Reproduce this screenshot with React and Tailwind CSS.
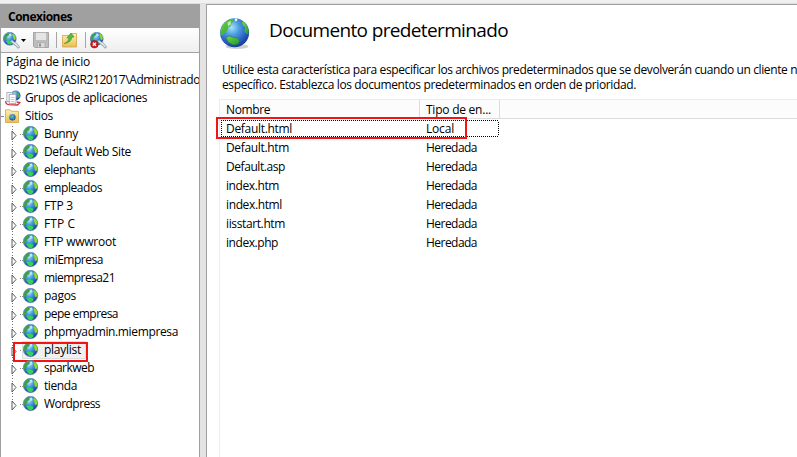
import { useLayoutEffect, useRef, useState } from "react";

// Text tracked so that it fills exactly `w` pixels.
function Fit({ w, children }) {
  const ref = useRef(null);
  const [spacing, setSpacing] = useState(0);
  useLayoutEffect(() => {
    const natural = ref.current.getBoundingClientRect().width;
    setSpacing((w - natural) / children.length);
  }, []);
  return (
    <span ref={ref} className="inline-block whitespace-pre" style={{ letterSpacing: spacing + "px" }}>
      {children}
    </span>
  );
}

function Defs() {
  return (
    <svg className="absolute h-0 w-0">
      <defs>
        <radialGradient id="sea" cx="40%" cy="32%" r="68%">
          <stop offset="0" stopColor="#a5e3fa" />
          <stop offset=".38" stopColor="#4c9de0" />
          <stop offset=".75" stopColor="#2a60c6" />
          <stop offset="1" stopColor="#1b3f94" />
        </radialGradient>
        <linearGradient id="land" x1="0" y1="0" x2="1" y2="1">
          <stop offset="0" stopColor="#7ed63c" />
          <stop offset="1" stopColor="#169a35" />
        </linearGradient>
        <linearGradient id="folder" x1="0" y1="0" x2="0" y2="1">
          <stop offset="0" stopColor="#fff0b4" />
          <stop offset="1" stopColor="#e9bd58" />
        </linearGradient>
      </defs>
    </svg>
  );
}

function SmallGlobeArt() {
  return (
    <g>
      <circle cx="7.5" cy="7.5" r="7.2" fill="url(#sea)" stroke="#5d7fac" strokeWidth=".6" />
      <path d="M.8 6.5Q1.8 2.5 5.6 .8L6.9 1.5 6 4.2 4.2 5.3 3.7 7.5 2 9.2 .8 8.6Z" fill="#3fa046" />
      <path d="M10.2 2.6 12 2.2 13.8 4.6 14.3 7.4 13.2 9.2 11.9 8.4 11.3 5.8Z" fill="#8bdc2a" />
      <path d="M3.2 10 6.4 9.2 10.2 10.6 10.4 12.6 8.4 14.3 5.6 13.7Z" fill="#35d25a" />
      <path d="M6.9 2 9 1.6 9.7 4.2 7.2 5Z" fill="#d2f5ff" opacity=".8" />
    </g>
  );
}

function SmallGlobe() {
  return (
    <svg viewBox="0 0 16 16" className="size-4 shrink-0">
      <SmallGlobeArt />
    </svg>
  );
}

function LargeGlobe() {
  return (
    <svg viewBox="0 0 32 34" className="h-[34px] w-8 shrink-0">
      <ellipse cx="18" cy="29.5" rx="11.5" ry="2.4" fill="#777" opacity=".35" />
      <circle cx="15.6" cy="15.8" r="14.5" fill="url(#sea)" />
      <path d="M2 11.5Q5 4 11.5 1.9L15 2 14.3 4.6 12.3 6.2 11.6 9 8.8 10.5 8.5 13 5.7 15.5 4.2 18.5 1.5 17.5Z" fill="url(#land)" />
      <path d="M8.5 5.5 12 3.8 11.7 7.6 9 9.5Z" fill="#e6fbc9" opacity=".75" />
      <path d="M15.8 1.6 18.5 1.8 17.8 4 16 4.2Z" fill="#e8fbff" />
      <path d="M23 5 25.5 5.3 28 8.5 29.8 13.5 29.2 17.5 27 16.8 25.3 14 26.2 10.8 23.7 8Z" fill="url(#land)" />
      <path d="M7 20.3 10.5 18.9 14 20.3 18.7 21.3 20.8 24 18.8 27.3 14.5 28 9.2 25.2Z" fill="url(#land)" stroke="#147a34" strokeWidth=".5" />
    </svg>
  );
}

function ConnectIcon({ broken }) {
  return (
    <svg viewBox="0 0 17 17" className="size-[17px] shrink-0">
      <g transform="scale(.9)">
        <SmallGlobeArt />
      </g>
      <path d="M9 9.5 12.5 12.5M12 11.2 15.3 15" stroke="#8f9fab" strokeWidth="2.7" strokeLinecap="round" />
      <path d="M9 9.2 12.5 12.2M12.4 11.4 15.1 14.7" stroke="#dce8ee" strokeWidth="1.5" strokeLinecap="round" />
      {broken && (
        <g>
          <circle cx="4.4" cy="12.2" r="3.8" fill="#c91d24" stroke="#8e1118" strokeWidth=".6" />
          <path d="M2.8 10.6 6 13.8M6 10.6 2.8 13.8" stroke="#fff" strokeWidth="1.3" />
        </g>
      )}
    </svg>
  );
}

function SaveIcon() {
  return (
    <svg viewBox="0 0 16 16" className="size-4 shrink-0">
      <path d="M.5.5H15.5V15.5H1.8L.5 14.2Z" fill="#bdbdbd" stroke="#a5a5a5" />
      <path d="M3 .8H13V8H3Z" fill="#e5e5e5" />
      <path d="M4.5 10.5H12V15.5H4.5Z" fill="#d9d9d9" stroke="#a2a2a2" strokeWidth=".6" />
      <path d="M6 11.5H8V14.5H6Z" fill="#929292" />
    </svg>
  );
}

function UpFolderIcon() {
  return (
    <svg viewBox="0 0 15 16" className="h-4 w-[15px] shrink-0">
      <path d="M.5 3.5H8L9.5 1.5H14.5V15H.5Z" fill="url(#folder)" stroke="#d0a443" strokeWidth=".8" />
      <path d="M2.3 11.5Q6.5 10.5 7 5.7L4.8 6 9 1 12 5 9.8 5.2Q9.2 10.5 2.3 11.5Z" fill="#55bd38" stroke="#2d8e28" strokeWidth=".6" />
    </svg>
  );
}

function PoolsIcon() {
  return (
    <svg viewBox="0 0 16 16" className="size-4 shrink-0">
      <circle cx="10.5" cy="5.5" r="5" fill="url(#sea)" />
      <path d="M11.5 2 14.5 3.5 15 7.5 12.5 8Z" fill="#43ad42" />
      <path d="M1 11Q0 14 4 14.7L12.5 15 14.8 12.6 12 12" fill="none" stroke="#c6313b" strokeWidth="1.3" />
      <path d="M1.8 2.5H7.5V11.5H1.8Z" fill="#f6f8fb" stroke="#9aa1af" strokeWidth=".8" />
      <path d="M4.2 4.3H11V13.4H4.2Z" fill="#fff" stroke="#8b93a3" strokeWidth=".8" />
      <path d="M5.7 7.5H9.5M5.7 9.5H9.5M5.7 11.5H9.5" stroke="#a9b1c0" strokeWidth=".7" />
    </svg>
  );
}

function SitesIcon() {
  return (
    <svg viewBox="0 0 14 14" className="mr-0.5 size-3.5 shrink-0">
      <path d="M.5.8H5L6.5 2.3H13.5V13.5H.5Z" fill="url(#folder)" stroke="#d2a344" strokeWidth=".8" />
      <circle cx="7.4" cy="8.3" r="3.2" fill="url(#sea)" />
      <path d="M5 7.3 7 5.4 7.8 6.8 6 8.8ZM7.3 9 10 8.4 8.4 11Z" fill="#43ad42" />
    </svg>
  );
}

const sites = [
  ["Bunny", 34], ["Default Web Site", 87], ["elephants", 51], ["empleados", 58],
  ["FTP 3", 29], ["FTP C", 31], ["FTP wwwroot", 72], ["miEmpresa", 59],
  ["miempresa21", 71], ["pagos", 32], ["pepe empresa", 74],
  ["phpmyadmin.miempresa", 134], ["playlist", 37], ["sparkweb", 50],
  ["tienda", 33], ["Wordpress", 56],
];

const documents = [
  ["Default.html", 66, "Local", 28], ["Default.htm", 63, "Heredada", 51],
  ["Default.asp", 59, "Heredada", 51], ["index.htm", 53, "Heredada", 51],
  ["index.html", 56, "Heredada", 51], ["iisstart.htm", 59, "Heredada", 51],
  ["index.php", 52, "Heredada", 51],
];

function SiteRow({ name, w, last }) {
  const selected = name === "playlist";
  return (
    <div className="relative flex h-[18px] items-center pl-[10px]">
      <svg viewBox="0 0 12 18" className="h-[18px] w-3 shrink-0">
        <path d={last ? "M1.5 1V6" : "M1.5 1V18"} stroke="#777" strokeDasharray="1 2" />
        <path d="M9 9.5H12" stroke="#888" strokeDasharray="1 1" />
        <path d="M1 6 5 10.5 1 15Z" fill="#fff" stroke="#4a4a4a" strokeWidth=".9" />
      </svg>
      <div className={selected ? "-ml-px flex h-[18px] items-center border border-[#dedede] bg-[#f0f0f0] pr-1" : "flex items-center"}>
        <SmallGlobe />
        <span className="ml-[5px]"><Fit w={w}>{name}</Fit></span>
      </div>
      {selected && <div className="absolute top-[1px] left-[12px] h-5 w-[75px] border-2 border-[#f51414]" />}
    </div>
  );
}

function Connections() {
  return (
    <aside className="flex w-[200px] shrink-0 flex-col overflow-hidden border-x border-[#a0a0a0] bg-white">
      <div className="flex h-6 shrink-0 items-center bg-[#a0a0a0] pt-px pl-[7px] font-bold">
        <Fit w={64}>Conexiones</Fit>
      </div>
      <div className="flex h-[25px] shrink-0 items-center border-b border-[#a0a0a0] bg-linear-to-b from-white to-[#eeeeee] pl-0.5">
        <ConnectIcon />
        <svg viewBox="0 0 5 3" className="ml-px h-[3px] w-[5px]"><path d="M0 0H5L2.5 3Z" fill="#000" /></svg>
        <div className="ml-[7px] flex"><SaveIcon /></div>
        <div className="ml-[7px] h-4 w-px bg-[#a6a6a6]" />
        <div className="ml-[5px] flex"><UpFolderIcon /></div>
        <div className="ml-[8px] h-4 w-px bg-[#a6a6a6]" />
        <div className="ml-[4px] flex"><ConnectIcon broken /></div>
      </div>
      <div className="leading-[18px]">
        <div className="h-[18px] pl-[5px]"><Fit w={84}>Página de inicio</Fit></div>
        <div className="h-[18px] pl-[5px]"><Fit w={194}>RSD21WS (ASIR212017\Administrado</Fit></div>
        <div className="flex h-[18px] items-center">
          <div className="mr-[2px] w-[2px] border-t border-dotted border-[#888]" />
          <PoolsIcon />
          <span className="ml-1"><Fit w={122}>Grupos de aplicaciones</Fit></span>
        </div>
        <div className="flex h-[18px] items-center">
          <div className="mr-[2px] w-[2px] border-t border-dotted border-[#888]" />
          <SitesIcon />
          <span className="ml-1"><Fit w={28}>Sitios</Fit></span>
        </div>
        {sites.map(([name, w], i) => (
          <SiteRow key={name} name={name} w={w} last={i === sites.length - 1} />
        ))}
      </div>
    </aside>
  );
}

function DocumentList() {
  return (
    <div className="ml-3 flex-1 border-t border-l border-[#ededed]">
      <div className="flex h-[19px] border-b border-[#dcdcdc] bg-[#fcfcfc] leading-[20px]">
        <div className="w-[200px] border-r border-[#dcdcdc] pl-1.5"><Fit w={44}>Nombre</Fit></div>
        <div className="w-20 border-r border-[#dcdcdc] pl-1.5"><Fit w={65}>Tipo de en...</Fit></div>
      </div>
      <div className="relative leading-[20px]">
        {documents.map(([name, w, type, tw]) => (
          <div key={name} className="flex h-[19px]">
            <div className="w-[200px] pl-1.5"><Fit w={w}>{name}</Fit></div>
            <div className="w-20 pl-1.5"><Fit w={tw}>{type}</Fit></div>
          </div>
        ))}
        <svg viewBox="0 0 279 18" className="absolute top-px left-0 h-[18px] w-[279px]">
          <path d="M1 .5H279M1 16.5H279M1.5 2V16M278.5 2V16" fill="none" stroke="#000" strokeDasharray="1 1" shapeRendering="crispEdges" />
        </svg>
        <div className="absolute -top-[2px] -left-[4px] h-[22px] w-[251px] border-2 border-[#f51414]" />
      </div>
    </div>
  );
}

export default function App() {
  return (
    <div className="flex h-[457px] w-[797px] flex-col overflow-hidden bg-[#e3e3e3] font-['Open_Sans','Noto_Sans',sans-serif] text-[12px] text-black">
      <Defs />
      <div className="h-1 shrink-0 border-b border-[#dedede] bg-[#f0f0f0]" />
      <div className="flex min-h-0 flex-1">
        <Connections />
        <main className="ml-1.5 flex min-w-0 flex-1 flex-col overflow-hidden border-t border-l border-[#a0a0a0] bg-white">
          <div className="flex h-[57px] shrink-0 pt-[12px] pl-3">
            <LargeGlobe />
            <h1 className="ml-[18px] text-[19px] leading-[26px] font-normal"><Fit w={239}>Documento predeterminado</Fit></h1>
          </div>
          <div className="h-[37px] shrink-0 pl-[15px] leading-[15px] whitespace-nowrap">
            <div><Fit w={582}>Utilice esta característica para especificar los archivos predeterminados que se devolverán cuando un cliente no</Fit></div>
            <div><Fit w={414}>específico. Establezca los documentos predeterminados en orden de prioridad.</Fit></div>
          </div>
          <DocumentList />
        </main>
      </div>
    </div>
  );
}
